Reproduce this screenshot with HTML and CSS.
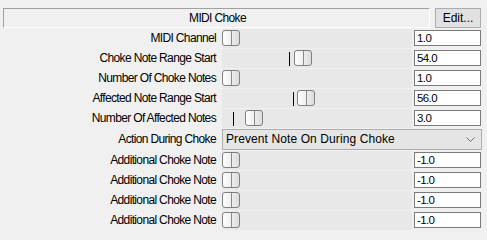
FILE: index.html
```html
<!DOCTYPE html>
<html>
<head>
<meta charset="utf-8">
<link rel="stylesheet" href="styles.css">
</head>
<body>
<div class="panel">
  <div class="header">
    <div class="title">MIDI Choke</div>
    <button class="edit">Edit...</button>
  </div>
  <div class="rows">
    <div class="row">
      <div class="label">MIDI Channel</div>
      <div class="track"><div class="thumb" style="left:0px"></div></div>
      <div class="value">1.0</div>
    </div>
    <div class="row">
      <div class="label">Choke Note Range Start</div>
      <div class="track"><div class="tick" style="left:67px"></div><div class="thumb" style="left:72px"></div></div>
      <div class="value">54.0</div>
    </div>
    <div class="row">
      <div class="label">Number Of Choke Notes</div>
      <div class="track"><div class="thumb" style="left:0px"></div></div>
      <div class="value">1.0</div>
    </div>
    <div class="row">
      <div class="label">Affected Note Range Start</div>
      <div class="track"><div class="tick" style="left:71px"></div><div class="thumb" style="left:75px"></div></div>
      <div class="value">56.0</div>
    </div>
    <div class="row">
      <div class="label">Number Of Affected Notes</div>
      <div class="track"><div class="tick" style="left:11px"></div><div class="thumb" style="left:23px"></div></div>
      <div class="value">3.0</div>
    </div>
    <div class="row row-select">
      <div class="label">Action During Choke</div>
      <div class="select">
        <span>Prevent Note On During Choke</span>
        <svg class="chev" width="9" height="5" viewBox="0 0 9 5"><path d="M0.5 0.5 L4.5 4.5 L8.5 0.5" fill="none" stroke="#6a6a6a" stroke-width="1"/></svg>
      </div>
    </div>
    <div class="row">
      <div class="label">Additional Choke Note</div>
      <div class="track"><div class="thumb" style="left:0px"></div></div>
      <div class="value">-1.0</div>
    </div>
    <div class="row">
      <div class="label">Additional Choke Note</div>
      <div class="track"><div class="thumb" style="left:0px"></div></div>
      <div class="value">-1.0</div>
    </div>
    <div class="row">
      <div class="label">Additional Choke Note</div>
      <div class="track"><div class="thumb" style="left:0px"></div></div>
      <div class="value">-1.0</div>
    </div>
    <div class="row">
      <div class="label">Additional Choke Note</div>
      <div class="track"><div class="thumb" style="left:0px"></div></div>
      <div class="value">-1.0</div>
    </div>
  </div>
</div>
</body>
</html>
```

FILE: styles.css
```css
html, body {
  margin: 0;
  padding: 0;
  background: #f0f0f0;
  width: 487px;
  height: 235px;
  overflow: hidden;
}
body {
  font-family: "Liberation Sans", Arial, sans-serif;
  font-size: 12px;
  letter-spacing: -0.65px;
  color: #000;
}
.panel {
  padding: 8px 5px 0 3px;
}
.header {
  display: flex;
  gap: 5px;
  height: 20px;
}
.title {
  flex: 1;
  box-sizing: border-box;
  border-top: 1px solid #a0a0a0;
  border-left: 1px solid #a0a0a0;
  border-right: 1px solid #ffffff;
  border-bottom: 1px solid #ffffff;
  display: flex;
  align-items: center;
  justify-content: center;
  padding-left: 2px;
  line-height: 1;
}
.edit {
  width: 46px;
  height: 20px;
  box-sizing: border-box;
  margin: 0 1px 0 0;
  padding: 0;
  background: #e1e1e1;
  border: 1px solid #adadad;
  font-family: inherit;
  font-size: 12px;
  letter-spacing: 0;
  color: #000;
}
.rows {
  display: flex;
  flex-direction: column;
}
.row {
  display: grid;
  grid-template-columns: 215px 192px 67px;
  column-gap: 2px;
  height: 20px;
  align-items: center;
}
.label {
  text-align: right;
  white-space: nowrap;
  padding-right: 2px;
}
.track {
  position: relative;
  height: 19px;
  margin-top: 1px;
  background: #e8e8e8;
  margin-left: 2px;
}
.thumb {
  position: absolute;
  top: 1px;
  width: 18px;
  height: 16px;
  box-sizing: border-box;
  border: 1px solid #808080;
  border-radius: 3px;
  background: linear-gradient(to right, #ffffff 0%, #f2f2f2 40%, #dcdcdc 100%);
}
.thumb::after {
  content: "";
  position: absolute;
  left: 8px;
  top: 0;
  bottom: 0;
  width: 1px;
  background: #8a8a8a;
}
.tick {
  position: absolute;
  top: 3px;
  width: 1px;
  height: 14px;
  background: #000;
}
.value {
  box-sizing: border-box;
  height: 16px;
  border: 1px solid #7a7a7a;
  background: #fff;
  padding-left: 2px;
  line-height: 14px;
  font-size: 11.5px;
  letter-spacing: -0.6px;
}
.row-select {
  height: 22px;
  grid-template-columns: 215px 262px;
}
.select {
  box-sizing: border-box;
  height: 21px;
  margin-left: 2px;
  background: #e5e5e5;
  border: 1px solid #adadad;
  display: flex;
  align-items: center;
  justify-content: space-between;
  padding: 0 6px 0 3px;
  letter-spacing: 0.1px;
}
.chev {
  display: block;
}
```
